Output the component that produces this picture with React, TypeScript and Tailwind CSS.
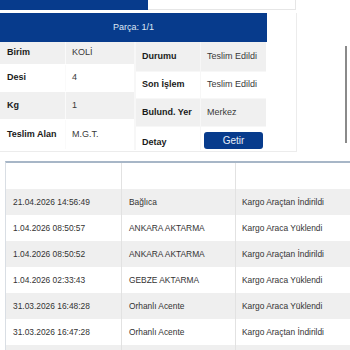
import React from "react";

const BLUE = "bg-[#073b8c]";

const leftRows = [
  { k: "Birim", v: "KOLİ", h: "h-[23px]", gray: true },
  { k: "Desi", v: "4", h: "h-[27px]", gray: false },
  { k: "Kg", v: "1", h: "h-[28px]", gray: true },
  { k: "Teslim Alan", v: "M.G.T.", h: "h-[30px]", gray: false },
];

const rightRows = [
  { k: "Durumu", v: "Teslim Edildi", h: "h-[30px]", gray: true },
  { k: "Son İşlem", v: "Teslim Edildi", h: "h-[27px]", gray: false },
  { k: "Bulund. Yer", v: "Merkez", h: "h-[28px]", gray: true },
];

const moves = [
  ["21.04.2026 14:56:49", "Bağlıca", "Kargo Araçtan İndirildi"],
  ["1.04.2026 08:50:57", "ANKARA AKTARMA", "Kargo Araca Yüklendi"],
  ["1.04.2026 08:50:52", "ANKARA AKTARMA", "Kargo Araçtan İndirildi"],
  ["1.04.2026 02:33:43", "GEBZE AKTARMA", "Kargo Araca Yüklendi"],
  ["31.03.2026 16:48:28", "Orhanlı Acente", "Kargo Araca Yüklendi"],
  ["31.03.2026 16:47:28", "Orhanlı Acente", "Kargo Araçtan İndirildi"],
  ["", "", ""],
];

export default function App() {
  return (
    <div className="relative w-[350px] h-[350px] overflow-hidden bg-white font-['Liberation_Sans',Arial,sans-serif]">
      {/* top strip */}
      <div className="flex h-[10px]">
        <div className={`w-[148px] ${BLUE}`} />
        <div className="w-[148px] border-b border-r border-[#e6e6e6]" />
      </div>

      {/* panel */}
      <div className="mt-[3px] w-[297px] h-[139px] border-r border-b border-[#ececec] bg-white">
        <div className={`w-[267px] h-[29px] ${BLUE} flex items-center justify-center text-[9px] text-[#dfe8f5]`}>
          Parça: 1/1
        </div>
        <div className="flex">
          {/* left table */}
          <div className="w-[134px] flex flex-col">
            {leftRows.map((r) => (
              <div
                key={r.k}
                className={`flex ${r.h} ${r.gray ? "bg-[#f0f0f0]" : "bg-white"} border-b border-white`}
              >
                <div className="w-[66px] pl-[7px] flex items-center text-[9px] font-bold text-[#1a1a1a] border-r border-[#fafafa]">
                  {r.k}
                </div>
                <div className="flex-1 pl-[6px] flex items-center text-[9px] text-[#3a3a3a]">
                  {r.v}
                </div>
              </div>
            ))}
          </div>
          {/* right table */}
          <div className="w-[132px] flex flex-col border-l-2 border-[#f7f7f7]">
            {rightRows.map((r) => (
              <div
                key={r.k}
                className={`flex ${r.h} ${r.gray ? "bg-[#f0f0f0]" : "bg-white"} border-b border-[#f7f7f7]`}
              >
                <div className="w-[65px] pl-[6px] flex items-center text-[9px] font-bold text-[#1a1a1a] border-r border-[#f7f7f7]">
                  {r.k}
                </div>
                <div className="flex-1 pl-[6px] flex items-center text-[9px] text-[#3a3a3a]">
                  {r.v}
                </div>
              </div>
            ))}
            <div className="flex h-[23px] bg-white">
              <div className="w-[65px] pl-[6px] pt-[9px] text-[9px] font-bold text-[#1a1a1a] border-r border-[#f7f7f7]">
                Detay
              </div>
              <div className="flex-1 pl-[3px] pt-[5px]">
                <div className={`w-[59px] h-[17px] rounded-[3px] ${BLUE} flex items-center justify-center text-[10px] text-[#e6edf7]`}>
                  Getir
                </div>
              </div>
            </div>
          </div>
        </div>
      </div>

      {/* scrollbar */}
      <div className="absolute left-[345px] top-[46px] w-[2px] h-[97px] bg-[#8a8a8a]" />

      {/* movements table */}
      <div className="mt-[9px] ml-[5px] border-t-2 border-l border-t-[#a7b6c7] border-l-[#d9dee4]">
        <div className="grid grid-cols-[115px_114px_1fr] h-[26px] bg-white">
          <div />
          <div className="border-l border-[#e2e2e2]" />
          <div className="border-l border-[#e2e2e2]" />
        </div>
        {moves.map((m, i) => (
          <div
            key={i}
            className={`grid grid-cols-[115px_114px_1fr] h-[26px] ${i % 2 === 0 ? "bg-[#efefef]" : "bg-white"} text-[8.4px] text-[#333]`}
          >
            <div className="pl-[7px] flex items-center">{m[0]}</div>
            <div className="pl-[7px] flex items-center border-l border-[#e2e2e2]">{m[1]}</div>
            <div className="pl-[6px] flex items-center border-l border-[#e2e2e2]">{m[2]}</div>
          </div>
        ))}
      </div>
    </div>
  );
}
